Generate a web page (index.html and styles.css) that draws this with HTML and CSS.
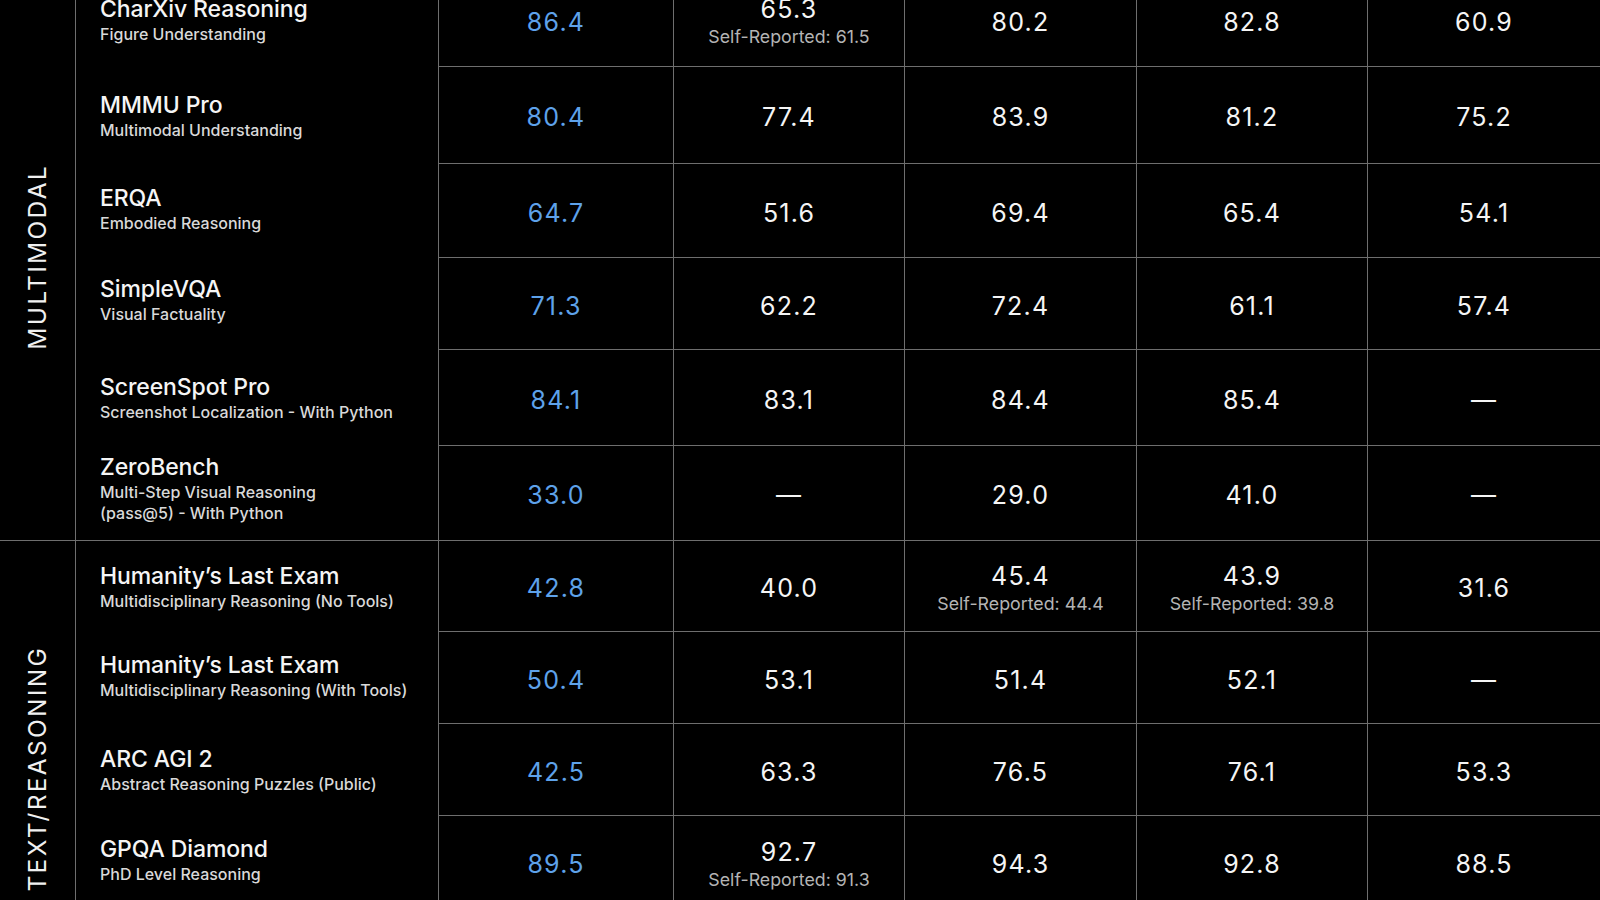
FILE: index.html
```html
<!DOCTYPE html>
<html lang="en">
<head>
<meta charset="utf-8">
<title>Benchmarks</title>
<link rel="stylesheet" href="styles.css">
</head>
<body>
<main class="table">
  <section class="section section-mm">
    <div class="label"><span>MULTIMODAL</span></div>

    <div class="name"><div class="title">CharXiv Reasoning</div><div class="sub">Figure Understanding</div></div>
    <div class="cell hl"><span class="num">86.4</span></div>
    <div class="cell"><span class="num">65.3</span><span class="self">Self-Reported: 61.5</span></div>
    <div class="cell"><span class="num">80.2</span></div>
    <div class="cell"><span class="num">82.8</span></div>
    <div class="cell"><span class="num">60.9</span></div>

    <div class="name"><div class="title">MMMU Pro</div><div class="sub">Multimodal Understanding</div></div>
    <div class="cell hl"><span class="num">80.4</span></div>
    <div class="cell"><span class="num">77.4</span></div>
    <div class="cell"><span class="num">83.9</span></div>
    <div class="cell"><span class="num">81.2</span></div>
    <div class="cell"><span class="num">75.2</span></div>

    <div class="name name-up-s"><div class="title">ERQA</div><div class="sub">Embodied Reasoning</div></div>
    <div class="cell hl"><span class="num">64.7</span></div>
    <div class="cell"><span class="num">51.6</span></div>
    <div class="cell"><span class="num">69.4</span></div>
    <div class="cell"><span class="num">65.4</span></div>
    <div class="cell"><span class="num">54.1</span></div>

    <div class="name name-up"><div class="title">SimpleVQA</div><div class="sub">Visual Factuality</div></div>
    <div class="cell hl"><span class="num">71.3</span></div>
    <div class="cell"><span class="num">62.2</span></div>
    <div class="cell"><span class="num">72.4</span></div>
    <div class="cell"><span class="num">61.1</span></div>
    <div class="cell"><span class="num">57.4</span></div>

    <div class="name"><div class="title">ScreenSpot Pro</div><div class="sub">Screenshot Localization - With Python</div></div>
    <div class="cell hl"><span class="num">84.1</span></div>
    <div class="cell"><span class="num">83.1</span></div>
    <div class="cell"><span class="num">84.4</span></div>
    <div class="cell"><span class="num">85.4</span></div>
    <div class="cell"><span class="num">—</span></div>

    <div class="name name-up"><div class="title">ZeroBench</div><div class="sub">Multi-Step Visual Reasoning<br>(pass@5) - With Python</div></div>
    <div class="cell hl last"><span class="num">33.0</span></div>
    <div class="cell last"><span class="num">—</span></div>
    <div class="cell last"><span class="num">29.0</span></div>
    <div class="cell last"><span class="num">41.0</span></div>
    <div class="cell last"><span class="num">—</span></div>
  </section>

  <section class="section section-tr">
    <div class="label label-end"><span>TEXT/REASONING</span></div>

    <div class="name"><div class="title">Humanity’s Last Exam</div><div class="sub">Multidisciplinary Reasoning (No Tools)</div></div>
    <div class="cell hl"><span class="num">42.8</span></div>
    <div class="cell"><span class="num">40.0</span></div>
    <div class="cell"><span class="num">45.4</span><span class="self">Self-Reported: 44.4</span></div>
    <div class="cell"><span class="num">43.9</span><span class="self">Self-Reported: 39.8</span></div>
    <div class="cell"><span class="num">31.6</span></div>

    <div class="name name-up-s"><div class="title">Humanity’s Last Exam</div><div class="sub">Multidisciplinary Reasoning (With Tools)</div></div>
    <div class="cell hl"><span class="num">50.4</span></div>
    <div class="cell"><span class="num">53.1</span></div>
    <div class="cell"><span class="num">51.4</span></div>
    <div class="cell"><span class="num">52.1</span></div>
    <div class="cell"><span class="num">—</span></div>

    <div class="name"><div class="title">ARC AGI 2</div><div class="sub">Abstract Reasoning Puzzles (Public)</div></div>
    <div class="cell hl"><span class="num">42.5</span></div>
    <div class="cell"><span class="num">63.3</span></div>
    <div class="cell"><span class="num">76.5</span></div>
    <div class="cell"><span class="num">76.1</span></div>
    <div class="cell"><span class="num">53.3</span></div>

    <div class="name name-up-s"><div class="title">GPQA Diamond</div><div class="sub">PhD Level Reasoning</div></div>
    <div class="cell hl"><span class="num">89.5</span></div>
    <div class="cell"><span class="num">92.7</span><span class="self">Self-Reported: 91.3</span></div>
    <div class="cell"><span class="num">94.3</span></div>
    <div class="cell"><span class="num">92.8</span></div>
    <div class="cell"><span class="num">88.5</span></div>
  </section>
</main>
</body>
</html>
```

FILE: styles.css
```css
* { box-sizing: border-box; }

html, body {
  margin: 0;
  padding: 0;
  background: #000;
  width: 1600px;
  height: 900px;
  overflow: hidden;
}

body {
  font-family: "Inter", "Noto Sans", "Liberation Sans", sans-serif;
  color: #f2f2f2;
}

.table {
  margin-top: -27px;
  width: 1600px;
}

.section {
  display: grid;
  grid-template-columns: 76px 362px 235px 231px 232px 231px 1fr;
  border-bottom: 1px solid #6e6e6e;
}

.section-mm {
  grid-template-rows: 94px 97px 94px 92px 96px 94px;
}

.section-tr {
  grid-template-rows: 91px 92px 92px 92px;
}

.label {
  grid-row: 1 / -1;
  grid-column: 1;
  border-right: 1px solid #6e6e6e;
  display: flex;
  align-items: center;
  justify-content: center;
}

.label span {
  writing-mode: vertical-rl;
  transform: rotate(180deg);
  font-size: 24.5px;
  font-weight: 400;
  letter-spacing: 2.3px;
  color: #f0f0f0;
  line-height: 1;
}

.label-end {
  align-items: flex-end;
  padding-bottom: 16px;
}

.name {
  display: flex;
  flex-direction: column;
  justify-content: center;
  padding-left: 24px;
  padding-top: 1px;
}

.name-up {
  padding-top: 0;
  padding-bottom: 8px;
}

.name-up-s {
  padding-top: 0;
  padding-bottom: 4px;
}

.title {
  font-size: 23px;
  font-weight: 500;
  line-height: 27px;
  color: #f5f5f5;
  letter-spacing: -0.1px;
}

.sub {
  font-size: 16px;
  font-weight: 500;
  line-height: 21px;
  color: #d9d9d9;
  margin-top: 1px;
}

.cell {
  border-left: 1px solid #6e6e6e;
  border-bottom: 1px solid #6e6e6e;
  display: flex;
  flex-direction: column;
  align-items: center;
  justify-content: center;
  padding-top: 4px;
}

.cell.last,
.section-tr .cell:nth-last-child(-n+5) {
  border-bottom: none;
}

.num {
  font-size: 25px;
  font-weight: 400;
  line-height: 28px;
  letter-spacing: 1.2px;
  color: #f5f5f5;
}

.hl .num {
  color: #5ea2ea;
}

.self {
  font-size: 17.8px;
  line-height: 22px;
  margin-top: 3px;
  color: #b4b4b4;
}
```
